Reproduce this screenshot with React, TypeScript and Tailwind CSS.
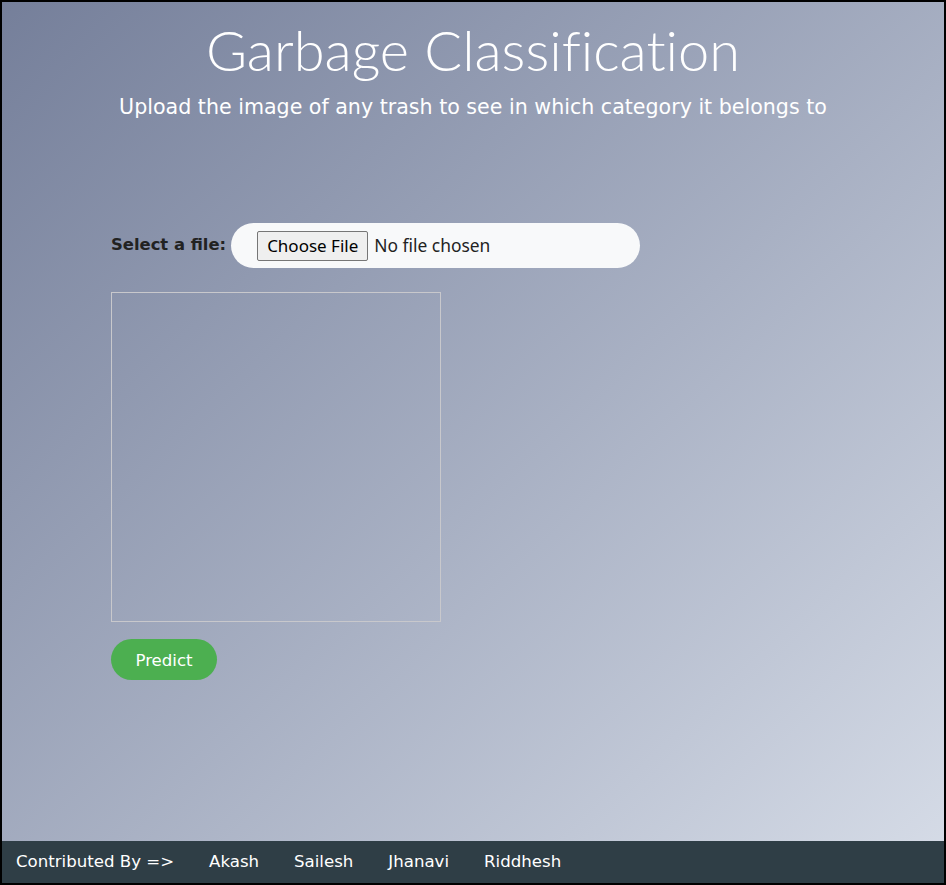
import React, { useState } from 'react';

const contributors = ['Akash', 'Sailesh', 'Jhanavi', 'Riddhesh'];

const App: React.FC = () => {
    const [fileName, setFileName] = useState<string | null>(null);

    return (
        <div className="h-[885px] w-full border-2 border-black bg-linear-to-br from-[#757f9a] to-[#d7dde8] flex flex-col overflow-hidden">
            <main className="flex-1">
                <header className="text-center text-white pt-[12px]">
                    <h1 className="font-['Lato',sans-serif] font-light text-[56px] leading-[72px] [font-variant-ligatures:none]">
                        Garbage Classification
                    </h1>
                    <p className="font-['DejaVu_Sans',sans-serif] text-[20.6px] leading-[26px] mt-[8px]">
                        Upload the image of any trash to see in which category it belongs to
                    </p>
                </header>

                <section className="pl-[109px] mt-[103px]">
                    <div className="flex items-center gap-[5px]">
                        <label className="font-['DejaVu_Sans',sans-serif] font-bold text-[16.4px] text-[#222]">
                            Select a file:
                        </label>
                        <div className="w-[409px] h-[45px] rounded-full bg-[#f8f9fa] flex items-center pl-[26px]">
                            <input
                                type="file"
                                onChange={(e) => setFileName(e.target.files?.[0]?.name ?? null)}
                                className="font-['Noto_Sans',sans-serif] text-[17.4px] text-[#222] file:font-['Noto_Sans',sans-serif] file:text-[17px] file:text-black file:bg-[#efefef] file:border file:border-[#767676] file:rounded-[2px] file:px-[9px] file:h-[30px] file:mr-[6px]"
                            />
                        </div>
                    </div>

                    <div className="mt-[24px] w-[330px] h-[330px] border border-[#c8c8cc]">
                        {fileName && <span className="sr-only">{fileName}</span>}
                    </div>

                    <button className="mt-[17px] w-[106px] h-[41px] pt-[3px] rounded-full bg-[#4caf50] text-white font-['DejaVu_Sans',sans-serif] text-[16.6px]">
                        Predict
                    </button>
                </section>
            </main>

            <footer className="h-[42px] bg-[#2f3e46] flex items-center pl-[14px] gap-[35px] text-white font-['DejaVu_Sans',sans-serif] text-[16.6px]">
                <span>Contributed By =&gt;</span>
                {contributors.map((name) => (
                    <span key={name}>{name}</span>
                ))}
            </footer>
        </div>
    );
};

export default App;
